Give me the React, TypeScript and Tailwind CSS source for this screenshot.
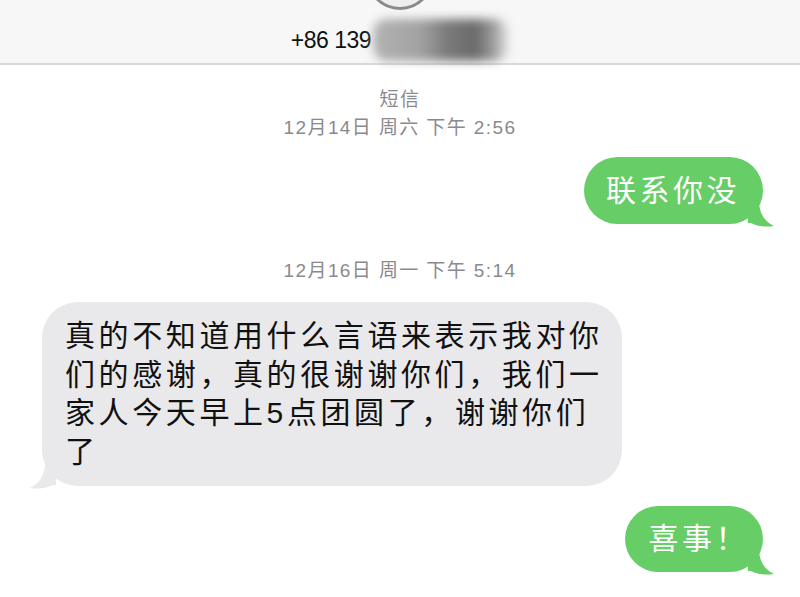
const font = "font-['Liberation_Sans','Noto_Sans_CJK_SC',sans-serif]"

const Tail = ({ side, color }: { side: 'left' | 'right'; color: string }) => (
  <svg
    width="26"
    height="24"
    viewBox="0 0 26 24"
    className={
      side === 'right'
        ? 'absolute -right-[11px] -bottom-[3px]'
        : 'absolute -left-[12px] -bottom-[3px] -scale-x-100'
    }
  >
    <path d="M0 0 H11 C12 11 16 18 26 23 C16 24.5 8 22.5 3 20 H0 Z" fill={color} />
  </svg>
)

const Stamp = ({ text }: { text: string }) => (
  <p className="text-center text-[19px] leading-6 tracking-[1.4px] text-[#8a8a8e]">{text}</p>
)

export default function App() {
  return (
    <div className={`${font} flex h-[597px] w-[800px] flex-col overflow-hidden bg-white`}>
      <div className="flex h-[65px] flex-col items-center border-b-2 border-[#d9d9d9] bg-[#f7f7f7]">
        <div className="-mt-[58px] h-[68px] w-[68px] shrink-0 rounded-full border-[3px] border-[#8a8a8a] bg-[#eeeeee]" />
        <div className="mt-[9px] flex items-center">
          <span className="text-[23px] leading-7 tracking-[-0.5px] text-[#111]">+86 139</span>
          <span className="ml-[2px] h-[42px] w-[136px] rounded-[14px] bg-[linear-gradient(90deg,#b3b3b3,#a2a2a2_35%,#7a7a7a_55%,#6a6a6a_75%,#9a9a9a_88%,#e6e6e6)] blur-[5px]" />
        </div>
      </div>

      <div className="mt-[23px] flex flex-col gap-[4px]">
        <Stamp text="短信" />
        <Stamp text="12月14日 周六 下午 2:56" />
      </div>

      <div className="mt-[17px] flex justify-end pr-[37px]">
        <div className="relative rounded-[34px] bg-[#67cd67] py-[14px] pl-[22px] pr-[23px] text-[30px] leading-[39px] tracking-[3.5px] text-white">
          联系你没
          <Tail side="right" color="#67cd67" />
        </div>
      </div>

      <div className="mt-[35px]">
        <Stamp text="12月16日 周一 下午 5:14" />
      </div>

      <div className="mt-[19px] flex pl-[42px]">
        <div className="relative w-[580px] rounded-[36px] bg-[#e9e9eb] py-[15px] pl-[23px] pr-[10px] text-[30px] leading-[38.5px] tracking-[3.6px] text-[#111]">
          真的不知道用什么言语来表示我对你
          <br />
          们的感谢，真的很谢谢你们，我们一
          <br />
          家人今天早上5点团圆了，谢谢你们
          <br />了
          <Tail side="left" color="#e9e9eb" />
        </div>
      </div>

      <div className="mt-[20px] flex justify-end pr-[37px]">
        <div className="relative rounded-[34px] bg-[#67cd67] py-[14px] pl-[24px] pr-[14px] text-[30px] leading-[38px] tracking-[3.5px] text-white">
          喜事！
          <Tail side="right" color="#67cd67" />
        </div>
      </div>
    </div>
  )
}
